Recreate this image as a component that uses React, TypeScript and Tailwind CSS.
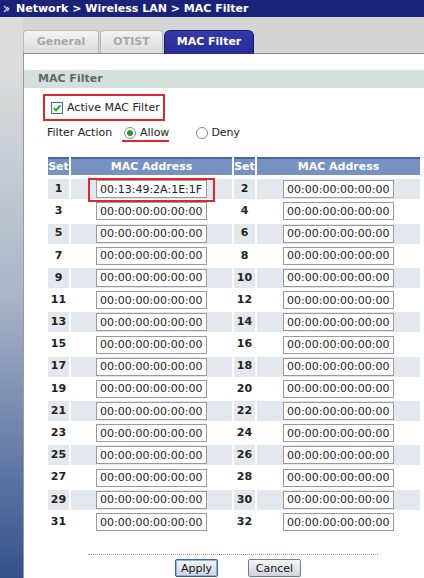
import React from 'react';

const font = "font-['DejaVu_Sans',Verdana,sans-serif]";

function Radio({ on }: { on?: boolean }) {
  return (
    <span className="w-[12px] h-[12px] rounded-full border border-[#7d8aa0] bg-white flex items-center justify-center shrink-0">
      {on && <span className="w-[6px] h-[6px] rounded-full bg-[#2c9a2c]" />}
    </span>
  );
}

function MacInput({ value }: { value: string }) {
  return (
    <div className="w-[111px] h-[18px] border border-[#9a9a9a] bg-white flex items-center px-[3px] text-[11px] text-[#222] leading-none whitespace-nowrap">
      {value}
    </div>
  );
}

function SetCell({ n, shaded }: { n: number; shaded: boolean }) {
  return (
    <div className={`flex items-center justify-center text-[11px] font-bold text-[#222] ${shaded ? 'bg-[#e3e7ee]' : ''}`}>
      {n}
    </div>
  );
}

function MacCell({ value, shaded, mark }: { value: string; shaded: boolean; mark?: boolean }) {
  return (
    <div className={`relative flex items-center justify-center ${shaded ? 'bg-[#e3e7ee]' : ''}`}>
      <MacInput value={value} />
      {mark && <div className="absolute left-[17px] top-[-1px] w-[127px] h-[24px] border-2 border-[#e0262b]" />}
    </div>
  );
}

export default function App() {
  const rows = Array.from({ length: 16 }, (_, i) => i);
  return (
    <div className={`w-[424px] h-[578px] overflow-hidden flex flex-col bg-white ${font}`}>
      <div className="h-[17px] bg-[#1b2378] flex items-center gap-[5px] pl-[3px] shrink-0">
        <svg width="8" height="8" viewBox="0 0 8 8">
          <path d="M1 1 L4 4 L1 7" stroke="#c9cbe0" strokeWidth="1.4" fill="none" />
          <path d="M4 2 L6 4 L4 6" stroke="#c9cbe0" strokeWidth="1.2" fill="none" />
        </svg>
        <span className="text-white font-bold text-[11px] leading-none">Network &gt; Wireless LAN &gt; MAC Filter</span>
      </div>
      <div className="flex flex-1 min-h-0">
        <div className="w-[23px] shrink-0 bg-gradient-to-b from-[#dcdcdc] from-10% via-[#a9b4c8] via-50% to-[#36508c]" />
        <div className="flex-1 flex flex-col min-w-0">
          <div className="h-[37px] bg-[#d5d5d5] flex items-end shrink-0 border-b border-[#8c8c8c]">
            <div className="w-[76px] h-[23px] mr-[1px] rounded-t-[4px] border border-b-0 border-[#b8b8b8] bg-gradient-to-b from-[#f4f4f4] to-[#dcdcdc] flex items-center justify-center text-[11px] font-bold text-[#a9a9a9]">
              General
            </div>
            <div className="w-[63px] h-[23px] mr-[1px] rounded-t-[4px] border border-b-0 border-[#b8b8b8] bg-gradient-to-b from-[#f4f4f4] to-[#dcdcdc] flex items-center justify-center text-[11px] font-bold text-[#a9a9a9]">
              OTIST
            </div>
            <div className="w-[90px] h-[24px] -mb-[1px] rounded-t-[6px] border border-b-0 border-[#141a6a] bg-gradient-to-b from-[#3439a8] to-[#272c96] flex items-center justify-center text-[11px] font-bold text-white">
              MAC Filter
            </div>
          </div>
          <div className="flex-1 bg-white border-l border-[#9a9a9a] flex flex-col pt-[16px]">
            <div className="h-[18px] bg-[#d5dfdb] flex items-center pl-[14px] text-[11px] font-bold text-[#5b6a6a]">
              MAC Filter
            </div>
            <div className="pl-[19px] pt-[6px]">
              <div className="w-[122px] h-[27px] border-2 border-[#e0262b] flex items-center pl-[6px] gap-[4px]">
                <svg width="12" height="12" viewBox="0 0 12 12">
                  <rect x="0.5" y="0.5" width="11" height="11" fill="#f4f6f8" stroke="#4b6d90" />
                  <path d="M2.8 6 L5 8.4 L9.3 3.4" stroke="#22a02a" strokeWidth="1.8" fill="none" />
                </svg>
                <span className="text-[11px] text-[#222] leading-none">Active MAC Filter</span>
              </div>
            </div>
            <div className="flex items-center pl-[23px] mt-[4px] h-[16px] text-[11px] text-[#222]">
              <span className="w-[76px]">Filter Action</span>
              <div className="relative flex items-center gap-[4px] ml-[1px]">
                <Radio on />
                <span>Allow</span>
                <div className="absolute left-[-2px] top-[15px] w-[47px] h-[2px] bg-[#e0262b]" />
              </div>
              <div className="flex items-center gap-[3px] ml-[27px]">
                <Radio />
                <span>Deny</span>
              </div>
            </div>
            <div className="ml-[24px] mt-[16px] grid grid-cols-[21px_161px_21px_163px] gap-x-[2px] gap-y-[2.2px] auto-rows-[20px]">
              <div className="h-[18px] bg-[#7791c3] border-t-2 border-[#4b67a3] flex items-center justify-center text-[11px] font-bold text-white">Set</div>
              <div className="h-[18px] bg-[#7791c3] border-t-2 border-[#4b67a3] flex items-center justify-center text-[11px] font-bold text-white">MAC Address</div>
              <div className="h-[18px] bg-[#7791c3] border-t-2 border-[#4b67a3] flex items-center justify-center text-[11px] font-bold text-white">Set</div>
              <div className="h-[18px] bg-[#7791c3] border-t-2 border-[#4b67a3] flex items-center justify-center text-[11px] font-bold text-white">MAC Address</div>
              {rows.map((i) => {
                const shaded = i % 2 === 0;
                return (
                  <React.Fragment key={i}>
                    <SetCell n={i * 2 + 1} shaded={shaded} />
                    <MacCell value={i === 0 ? '00:13:49:2A:1E:1F' : '00:00:00:00:00:00'} shaded={shaded} mark={i === 0} />
                    <SetCell n={i * 2 + 2} shaded={shaded} />
                    <MacCell value="00:00:00:00:00:00" shaded={shaded} />
                  </React.Fragment>
                );
              })}
            </div>
            <div className="ml-[64px] mt-[22px] w-[290px] border-t border-dotted border-[#9a9a9a]" />
            <div className="flex items-center mt-[4px] pl-[151px] gap-[30px]">
              <button className="w-[43px] h-[18px] border border-[#3a5fb0] rounded-[2px] bg-gradient-to-b from-[#f6f6f6] to-[#cfd4dc] text-[11px] text-[#111] leading-none shadow-[inset_0_0_0_1px_#8fb0e8]">
                Apply
              </button>
              <button className="w-[53px] h-[18px] border border-[#6d7d99] rounded-[2px] bg-gradient-to-b from-[#f6f6f6] to-[#cfd4dc] text-[11px] text-[#111] leading-none">
                Cancel
              </button>
            </div>
          </div>
        </div>
      </div>
    </div>
  );
}
